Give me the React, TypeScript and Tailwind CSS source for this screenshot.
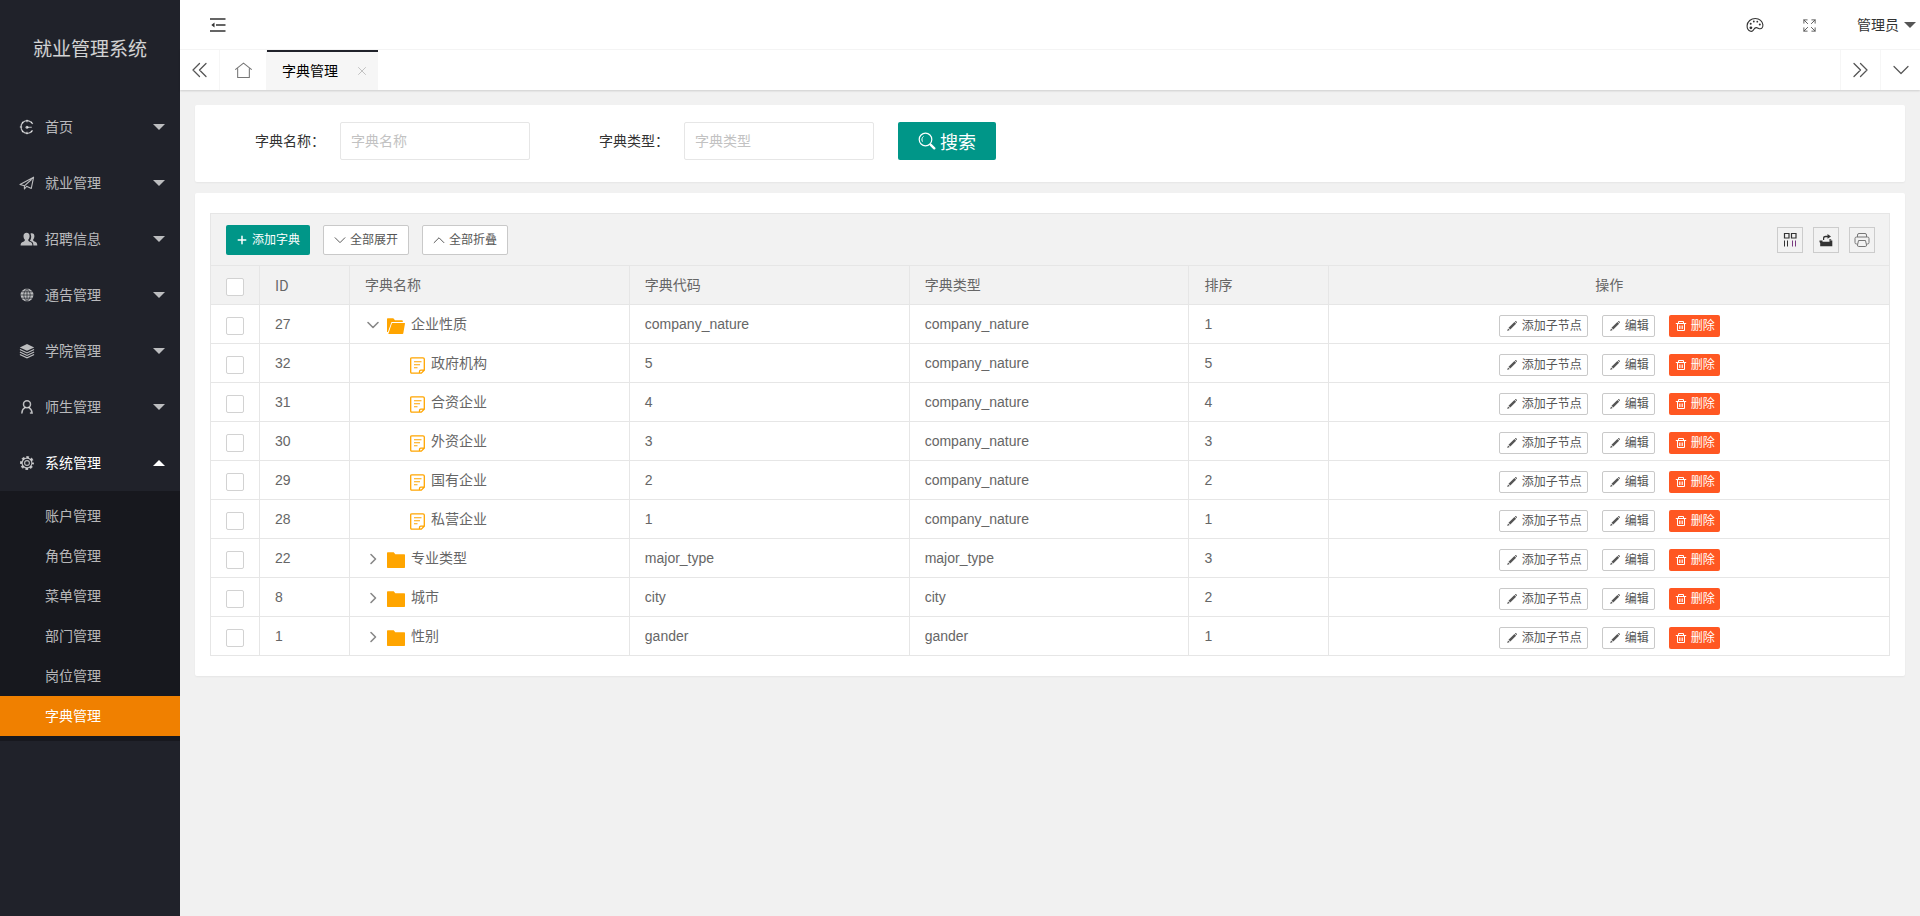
import React, { useState } from 'react'

interface IconProps {
  className?: string
}

interface DictRow {
  id: number
  name: string
  code: string
  type: string
  sort: number
  parent?: number
  folder?: boolean
}

const rows: DictRow[] = [
  { id: 27, name: '企业性质', code: 'company_nature', type: 'company_nature', sort: 1, folder: true },
  { id: 32, name: '政府机构', code: '5', type: 'company_nature', sort: 5, parent: 27 },
  { id: 31, name: '合资企业', code: '4', type: 'company_nature', sort: 4, parent: 27 },
  { id: 30, name: '外资企业', code: '3', type: 'company_nature', sort: 3, parent: 27 },
  { id: 29, name: '国有企业', code: '2', type: 'company_nature', sort: 2, parent: 27 },
  { id: 28, name: '私营企业', code: '1', type: 'company_nature', sort: 1, parent: 27 },
  { id: 22, name: '专业类型', code: 'major_type', type: 'major_type', sort: 3, folder: true },
  { id: 8, name: '城市', code: 'city', type: 'city', sort: 2, folder: true },
  { id: 1, name: '性别', code: 'gander', type: 'gander', sort: 1, folder: true },
]

const Line: React.FC<IconProps & { d: string; width?: number }> = ({
  d,
  width = 1,
  className = 'size-4',
}) => (
  <svg
    viewBox="0 0 16 16"
    className={className}
    fill="none"
    stroke="currentColor"
    strokeWidth={width}
    strokeLinecap="round"
    strokeLinejoin="round"
  >
    <path d={d} />
  </svg>
)

const DashboardIcon = () => (
  <svg viewBox="0 0 16 16" className="size-4" fill="none" stroke="currentColor" strokeWidth="1.2">
    <path d="M13.8 5A6.3 6.3 0 1 0 13.6 11.4" />
    <path d="M8 8.200h4.800M8 .8v2.400M8 12.800v2.400M.8 8h2.400M13 3l-1 1M3 3l1.200 1.200M3 13l1.200-1.200M13 13l-1-1" strokeWidth="1.1" />
    <circle cx="8" cy="8.200" r="1.500" fill="currentColor" stroke="none" />
  </svg>
)

const SendIcon = () => (
  <Line d="M1 9.500 14.600 2.200 12.300 13.400 7.600 11.300 5.400 14V10.800L12.500 4.500M1 9.500 5.400 10.800" width={1.100} />
)

const PeopleIcon = () => (
  <svg viewBox="0 0 18 16" className="ml-px h-4 w-[18px] shrink-0" fill="currentColor">
    <path d="M6.6 1.8c2 0 3.1 1.4 3 3.5-.1 1.500-.6 2.600-1.300 3.300-.2 1.200.1 1.600 1.400 2.100 2 .8 2.700 1.300 2.700 3.800H.6c0-2.500.8-3 2.800-3.800 1.300-.5 1.600-.9 1.400-2.100-.8-.7-1.200-1.800-1.300-3.300-.1-2.100 1.100-3.500 3.100-3.500Z" />
    <path d="M11.800 2.300c1.700 0 2.700 1.200 2.600 3.100-.1 1.300-.5 2.300-1.200 3-.1 1 .1 1.500 1.300 2 1.900.7 2.800 1.400 2.800 4.100h-3.900c0-2.700-.9-3.500-2.600-4.200-.6-.3-.8-.5-.8-.9.700-1 1.200-2.400 1.200-4 0-1.100-.3-2-.8-2.700.4-.3.900-.4 1.400-.4Z" />
  </svg>
)

const GlobeIcon = () => (
  <svg viewBox="0 0 16 16" className="size-4">
    <circle cx="8" cy="8" r="6.400" fill="currentColor" />
    <path
      d="M1.500 8h13M8 1.500v13M2.600 4.800h10.800M2.600 11.200h10.800M8 1.500C3.800 5 3.800 11 8 14.500M8 1.500c4.200 3.500 4.200 9.500 0 13"
      fill="none"
      stroke="#20222a"
      strokeWidth=".7"
    />
  </svg>
)

const LayersIcon = () => (
  <svg viewBox="0 0 16 16" className="size-4" fill="none" stroke="currentColor" strokeWidth="1.100">
    <path d="M8 1 15.200 4.400 8 7.800.8 4.400Z" fill="currentColor" stroke="none" />
    <path d="M.9 6.600 8 10l7.100-3.400M.9 9 8 12.400 15.100 9M.9 11.400 8 14.800l7.100-3.400" />
  </svg>
)

const UserIcon = () => (
  <svg viewBox="0 0 16 16" className="size-4" fill="none" stroke="currentColor" strokeWidth="1.500" strokeLinecap="round">
    <circle cx="8" cy="5.300" r="3.500" />
    <path d="M6 8.600C4 9.600 3 11.500 2.900 14M10 8.600c2 1.200 2.900 3 3.100 5.400h-1.600" />
  </svg>
)

const GearIcon = () => (
  <svg viewBox="0 0 16 16" className="size-4" fill="none" stroke="currentColor">
    <circle cx="8" cy="8" r="6" strokeWidth="2" strokeDasharray="2.700 2.012" strokeDashoffset="1.350" />
    <circle cx="8" cy="8" r="4.900" strokeWidth="1.200" />
    <circle cx="8" cy="8" r="2.400" strokeWidth="1.100" />
  </svg>
)

const PaletteIcon = () => (
  <svg viewBox="0 0 18 16" className="h-4 w-[18px]" fill="none" stroke="currentColor" strokeWidth="1.100">
    <path d="M4.600 14.300C2.200 13.500 1 11.300 1.100 8.800 1.300 4.500 5 1.500 9.300 1.500c4.200 0 7.400 2.700 7.600 6.400.1 2.400-1 3.900-2.800 3.900-1.500 0-2.400-1.300-3.900-1.200-1.500.1-2 1.200-2.700 2.300-.8 1.300-1.700 1.800-2.900 1.400Z" />
    <g fill="currentColor" stroke="none">
      <circle cx="4.900" cy="10.800" r="1.400" />
      <circle cx="4.700" cy="6.700" r="1" />
      <circle cx="7.800" cy="4.500" r=".9" />
      <circle cx="11.300" cy="4.700" r=".9" />
      <circle cx="13.800" cy="7.500" r="1" />
    </g>
  </svg>
)

const SearchIcon = () => (
  <svg viewBox="0 0 18 18" className="size-[18px]" fill="none" stroke="currentColor">
    <circle cx="7.500" cy="7.500" r="6.300" strokeWidth="1.200" />
    <path d="M4.300 9.300c-.9-1.800-.4-3.600.9-4.600" strokeLinecap="round" />
    <path d="m12.800 12.800 3.500 3.500" strokeWidth="2.400" strokeLinecap="round" />
  </svg>
)

const PencilIcon = () => (
  <svg viewBox="0 0 12 12" className="size-3" fill="currentColor">
    <path d="m1.200 11 .8-2.600 1.800 1.700ZM2.500 7.800l5.900-5.700 1.700 1.700-5.800 5.800ZM8.900 1.600l.6-.5c.4-.3 1.700.8 1.400 1.400l-.4.700Z" />
  </svg>
)

const TrashIcon = () => (
  <svg viewBox="0 0 12 12" className="size-3" fill="none" stroke="currentColor" strokeWidth="1">
    <path d="M.8 3.500h10.400M3.500 3.500v-2h5v2M2.500 3.500v7h7v-7" />
    <path d="M4.500 5.500v3.500M6 5.500v3.500M7.500 5.500v3.500" strokeWidth=".8" />
  </svg>
)

const FolderIcon: React.FC<{ open: boolean }> = ({ open }) => (
  <svg viewBox="0 0 18 16" className="mt-1 h-4 w-[18px] shrink-0 text-[#ffa500]" fill="currentColor">
    {open ? (
      <>
        <path d="M0 14V1Q0 .3.700.3h5.600L8 2.300h7q.8 0 .8.800v1H4.500L.9 14Z" />
        <path d="M5 5h12.500q.6 0 .5.600l-1.700 9.600q-.1.700-.8.700H1.300Z" />
      </>
    ) : (
      <path d="M0 1Q0 .3.700.3h6L8.300 2.300h9q.7 0 .7.700v12.200q0 .8-.7.800H.7q-.7 0-.7-.8Z" />
    )}
  </svg>
)

const NoteIcon = () => (
  <svg viewBox="0 0 15 17" className="mt-1 h-[17px] w-[15px] shrink-0 text-[#ffa500]" fill="none" stroke="currentColor" strokeWidth="1.300">
    <path d="M9.500 16.200H2Q.7 16.200.7 15V2Q.7.8 2 .8h11q1.300 0 1.300 1.200v11.200l-3 3H9.500v-1.700q0-1.300 1.300-1.300h3.300" />
    <path d="M4 4.800h7.500M4 7.800h6M4 10.800h3.500" strokeWidth="1.100" />
  </svg>
)

const ColumnsIcon = () => (
  <svg viewBox="0 0 14 14" className="size-3.5" fill="none" stroke="currentColor">
    <path d="M1.500.5h4.500v4.500H1.500ZM8.500.5H13v4.500H8.500Z" strokeWidth="1.200" />
    <path d="M1.500 7.500v6M4.500 7.500v6" />
    <path d="M9.500 7.500v6M12.500 7.500v6" stroke="#7a3a80" />
  </svg>
)

const ExportIcon = () => (
  <svg viewBox="0 0 14 14" className="size-3.5" fill="currentColor">
    <path d="M.5 7.500h3v1.300h7V7.500h2.800v5.700H1.200V10L.5 9ZM4 7V4.800q0-2 2.500-2h2V1L12 3.500 8.500 5.800V4.200H6.700q-1.500 0-1.500 1.300V7Z" />
    <path d="M10.300 6.300h1.900v1.200h-1.900Z" />
  </svg>
)

const PrinterIcon = () => (
  <svg viewBox="0 0 16 16" className="size-4" fill="none" stroke="currentColor" strokeWidth="1">
    <path d="M3.500 5V3q0-1.500 1.500-1.500h6q1.500 0 1.500 1.500v2M3.500 12H2.500Q1 12 1 10.500v-4Q1 5 2.500 5h11Q15 5 15 6.500v4q0 1.500-1.500 1.500h-1" />
    <path d="M4.500 8.500h7l1 4.500q.2 1.500-1.200 1.500H4.700q-1.400 0-1.200-1.500Z" />
  </svg>
)

const menu = [
  { name: '首页', icon: <DashboardIcon /> },
  { name: '就业管理', icon: <SendIcon /> },
  { name: '招聘信息', icon: <PeopleIcon /> },
  { name: '通告管理', icon: <GlobeIcon /> },
  { name: '学院管理', icon: <LayersIcon /> },
  { name: '师生管理', icon: <UserIcon /> },
  { name: '系统管理', icon: <GearIcon />, children: ['账户管理', '角色管理', '菜单管理', '部门管理', '岗位管理', '字典管理'] },
]

const Sidebar = () => (
  <aside className="w-[180px] shrink-0 bg-[#20222a] text-white/70">
    <h1 className="flex h-[99px] items-center justify-center text-[19px] text-white/80">就业管理系统</h1>
    <nav>
      {menu.map((item) => (
        <div key={item.name}>
          <a
            href="#"
            className={`flex h-14 items-center pr-[15px] pl-[19px] ${item.children ? 'text-white' : ''}`}
          >
            <span className="flex w-[26px] text-white/70">{item.icon}</span>
            <span className="grow">{item.name}</span>
            <svg viewBox="0 0 12 6" className="h-1.5 w-3" fill="currentColor">
              <path d={item.children ? 'M0 6 6 0l6 6Z' : 'M0 0h12L6 6Z'} />
            </svg>
          </a>
          {item.children && (
            <div className="bg-[#17181e] py-[5px]">
              {item.children.map((child) => (
                <a
                  key={child}
                  href="#"
                  className={`flex h-10 items-center pl-[45px] ${child === '字典管理' ? 'bg-[#f08000] text-white' : ''}`}
                >
                  {child}
                </a>
              ))}
            </div>
          )}
        </div>
      ))}
    </nav>
  </aside>
)

const TopBar = () => (
  <header className="flex h-[50px] items-center border-b border-[#f6f6f6] pt-px pr-1 pl-[30px] text-[#333]">
    <button type="button" aria-label="侧边伸缩">
      <svg viewBox="0 0 16 14" className="h-3.5 w-4" fill="none" stroke="currentColor" strokeWidth="1.400">
        <path d="M0 1h15.500M6 7h9.500M0 13h15.500" />
        <path d="M4.500 4.500v5L1.300 7Z" fill="currentColor" stroke="none" />
      </svg>
    </button>
    <div className="ml-auto flex items-center">
      <button type="button" aria-label="主题" className="mr-[38px]">
        <PaletteIcon />
      </button>
      <button type="button" aria-label="全屏" className="mr-10 text-[#555]">
        <Line d="M2 5.500V2h3.500M2 2l4 4M10.500 2H14v3.500M14 2l-4 4M2 10.500V14h3.500M2 14l4-4M10.500 14H14v-3.500M14 14l-4-4" className="size-[15px]" />
      </button>
      <button type="button" className="flex items-center gap-[5px]">
        管理员
        <svg viewBox="0 0 12 6" className="h-1.5 w-3 text-[#555]" fill="currentColor">
          <path d="M0 0h12L6 6Z" />
        </svg>
      </button>
    </div>
  </header>
)

const Tabs = () => (
  <div className="relative flex h-10 bg-white text-[#555] shadow-[0_1px_2px_rgba(0,0,0,0.15)]">
    <button type="button" aria-label="向左" className="flex w-10 items-center justify-center border-r border-[#f6f6f6]">
      <Line d="M7.500 1.500 1 8l6.500 6.500M14 1.500 7.500 8l6.500 6.500" width={1.300} />
    </button>
    <a href="#" aria-label="主页" className="flex w-[47px] items-center justify-center border-r border-[#f6f6f6]">
      <Line d="M.6 7 8 1l7.400 6M2.500 6v8.500h11V6" className="size-[17px] text-[#777]" />
    </a>
    <div className="flex items-center border-t-2 border-[#20222a] bg-[#f6f6f6] pr-3 pl-[15px] text-black">
      <span>字典管理</span>
      <button type="button" aria-label="关闭" className="ml-5 text-[#c2c2c2]">
        <Line d="m1 1 14 14M15 1 1 15" width={2} className="size-2" />
      </button>
    </div>
    <button type="button" aria-label="向右" className="ml-auto flex w-10 items-center justify-center border-l border-[#f6f6f6]">
      <Line d="m1 1.500 6.500 6.500L1 14.500M7.500 1.500 14 8l-6.500 6.500" width={1.300} />
    </button>
    <button type="button" aria-label="更多" className="flex w-10 items-center justify-center border-l border-[#f6f6f6]">
      <Line d="m1 4.500 7 7 7-7" width={1.200} />
    </button>
  </div>
)

const SearchField: React.FC<{ id: string; label: string }> = ({ id, label }) => (
  <div className="flex items-center">
    <label htmlFor={id} className="w-[140px] pr-[15px] text-right text-[#333]">
      {label}：
    </label>
    <input
      id={id}
      type="text"
      placeholder={label}
      className="h-[38px] w-[190px] rounded-xs border border-[#e6e6e6] px-2.5 outline-none placeholder:text-[#c2c2c2]"
    />
  </div>
)

const checkboxClass =
  'mx-auto mt-1 block size-[18px] appearance-none rounded-xs border border-[#d2d2d2] bg-white checked:bg-[#009688]'
const smallButton = 'flex h-[22px] items-center gap-1 rounded-xs pr-[5px] text-xs'
const outlineButton = 'border border-[#c9c9c9] bg-white text-[#555]'

const RowActions = () => (
  <div className="mt-1 flex items-center justify-center gap-3.5">
    <button type="button" className={`${smallButton} ${outlineButton} pl-1.5`}>
      <PencilIcon />
      添加子节点
    </button>
    <button type="button" className={`${smallButton} ${outlineButton} pl-1.5`}>
      <PencilIcon />
      编辑
    </button>
    <button type="button" className={`${smallButton} bg-[#ff5722] pl-1.5 text-white`}>
      <TrashIcon />
      删除
    </button>
  </div>
)

const DictTable = () => {
  const [opened, setOpened] = useState<number[]>([27])
  const visible = rows.filter((row) => !row.parent || opened.includes(row.parent))

  const toggle = (id: number) =>
    setOpened(opened.includes(id) ? opened.filter((o) => o !== id) : [...opened, id])

  return (
    <section className="rounded-xs bg-white px-[15px] py-5 shadow-[0_1px_2px_rgba(0,0,0,0.05)]">
      <div className="flex h-[52px] items-center gap-[13px] border border-b-0 border-[#e6e6e6] bg-[#f2f2f2] pr-3.5 pl-[15px] text-xs">
        <button type="button" className="flex h-[30px] items-center gap-1 rounded-xs bg-[#009688] px-2.5 text-white">
          <Line d="M8 3v10M3 8h10" width={2} className="size-3" />
          添加字典
        </button>
        <button
          type="button"
          className={`flex h-[30px] items-center gap-1 rounded-xs px-2.5 ${outlineButton}`}
          onClick={() => setOpened(rows.filter((row) => row.folder).map((row) => row.id))}
        >
          <Line d="m1.500 5 6.500 6.500L14.500 5" width={1.300} className="size-3" />
          全部展开
        </button>
        <button
          type="button"
          className={`flex h-[30px] items-center gap-1 rounded-xs px-2.5 ${outlineButton}`}
          onClick={() => setOpened([])}
        >
          <Line d="M1.500 11.500 8 5l6.500 6.500" width={1.300} className="size-3" />
          全部折叠
        </button>
        <div className="ml-auto flex gap-2.5 text-[#333]">
          <button type="button" aria-label="筛选列" className="flex size-[26px] items-center justify-center border border-[#ccc]">
            <ColumnsIcon />
          </button>
          <button type="button" aria-label="导出" className="flex size-[26px] items-center justify-center border border-[#ccc]">
            <ExportIcon />
          </button>
          <button type="button" aria-label="打印" className="flex size-[26px] items-center justify-center border border-[#ccc] text-[#777]">
            <PrinterIcon />
          </button>
        </div>
      </div>
      <table className="w-full table-fixed border-collapse text-left text-[#666] [&_td]:border [&_td]:border-[#e6e6e6] [&_td]:px-[15px] [&_th]:border [&_th]:border-[#e6e6e6] [&_th]:px-[15px] [&_th]:font-normal">
        <colgroup>
          <col className="w-[49px]" />
          <col className="w-[90px]" />
          <col className="w-1/6" />
          <col className="w-1/6" />
          <col className="w-1/6" />
          <col className="w-1/12" />
          <col />
        </colgroup>
        <thead className="bg-[#f2f2f2]">
          <tr className="h-[39px]">
            <th>
              <input type="checkbox" aria-label="全选" className={checkboxClass} />
            </th>
            <th className="font-['Noto_Sans_CJK_SC',sans-serif]">ID</th>
            <th>字典名称</th>
            <th>字典代码</th>
            <th>字典类型</th>
            <th>排序</th>
            <th className="text-center">操作</th>
          </tr>
        </thead>
        <tbody>
          {visible.map((row) => (
            <tr key={row.id} className="h-[39px]">
              <td>
                <input type="checkbox" aria-label={row.name} className={checkboxClass} />
              </td>
              <td>{row.id}</td>
              <td>
                {row.folder ? (
                  <div className="flex items-center gap-1.5">
                    <button
                      type="button"
                      aria-label={row.name}
                      className="mt-0.5 text-[#888]"
                      onClick={() => toggle(row.id)}
                    >
                      <Line
                        d={opened.includes(row.id) ? 'm3 5.500 5 5 5-5' : 'm6 3.500 4.500 4.500L6 12.500'}
                        width={1.600}
                        className="size-4"
                      />
                    </button>
                    <FolderIcon open={opened.includes(row.id)} />
                    <span>{row.name}</span>
                  </div>
                ) : (
                  <div className="flex items-center gap-1.5 pl-[45px]">
                    <NoteIcon />
                    <span>{row.name}</span>
                  </div>
                )}
              </td>
              <td>{row.code}</td>
              <td>{row.type}</td>
              <td>{row.sort}</td>
              <td>
                <RowActions />
              </td>
            </tr>
          ))}
        </tbody>
      </table>
    </section>
  )
}

export default function App() {
  return (
    <div className="flex min-h-screen bg-[#f1f1f1] font-['Liberation_Sans','Noto_Sans_CJK_SC',sans-serif] text-sm">
      <Sidebar />
      <div className="min-w-0 grow">
        <div className="bg-white">
          <TopBar />
          <Tabs />
        </div>
        <main className="flex flex-col gap-[11px] p-[15px]">
          <form
            className="flex flex-wrap items-center gap-3.5 rounded-xs bg-white px-[5px] pt-[17px] pb-[22px] shadow-[0_1px_2px_rgba(0,0,0,0.05)]"
            onSubmit={(e) => e.preventDefault()}
          >
            <SearchField id="dict-name" label="字典名称" />
            <SearchField id="dict-type" label="字典类型" />
            <button
              type="submit"
              className="ml-2.5 flex h-[38px] items-center gap-1 rounded-xs bg-[#009688] px-5 text-lg text-white"
            >
              <SearchIcon />
              <span className="pt-1">搜索</span>
            </button>
          </form>
          <DictTable />
        </main>
      </div>
    </div>
  )
}
